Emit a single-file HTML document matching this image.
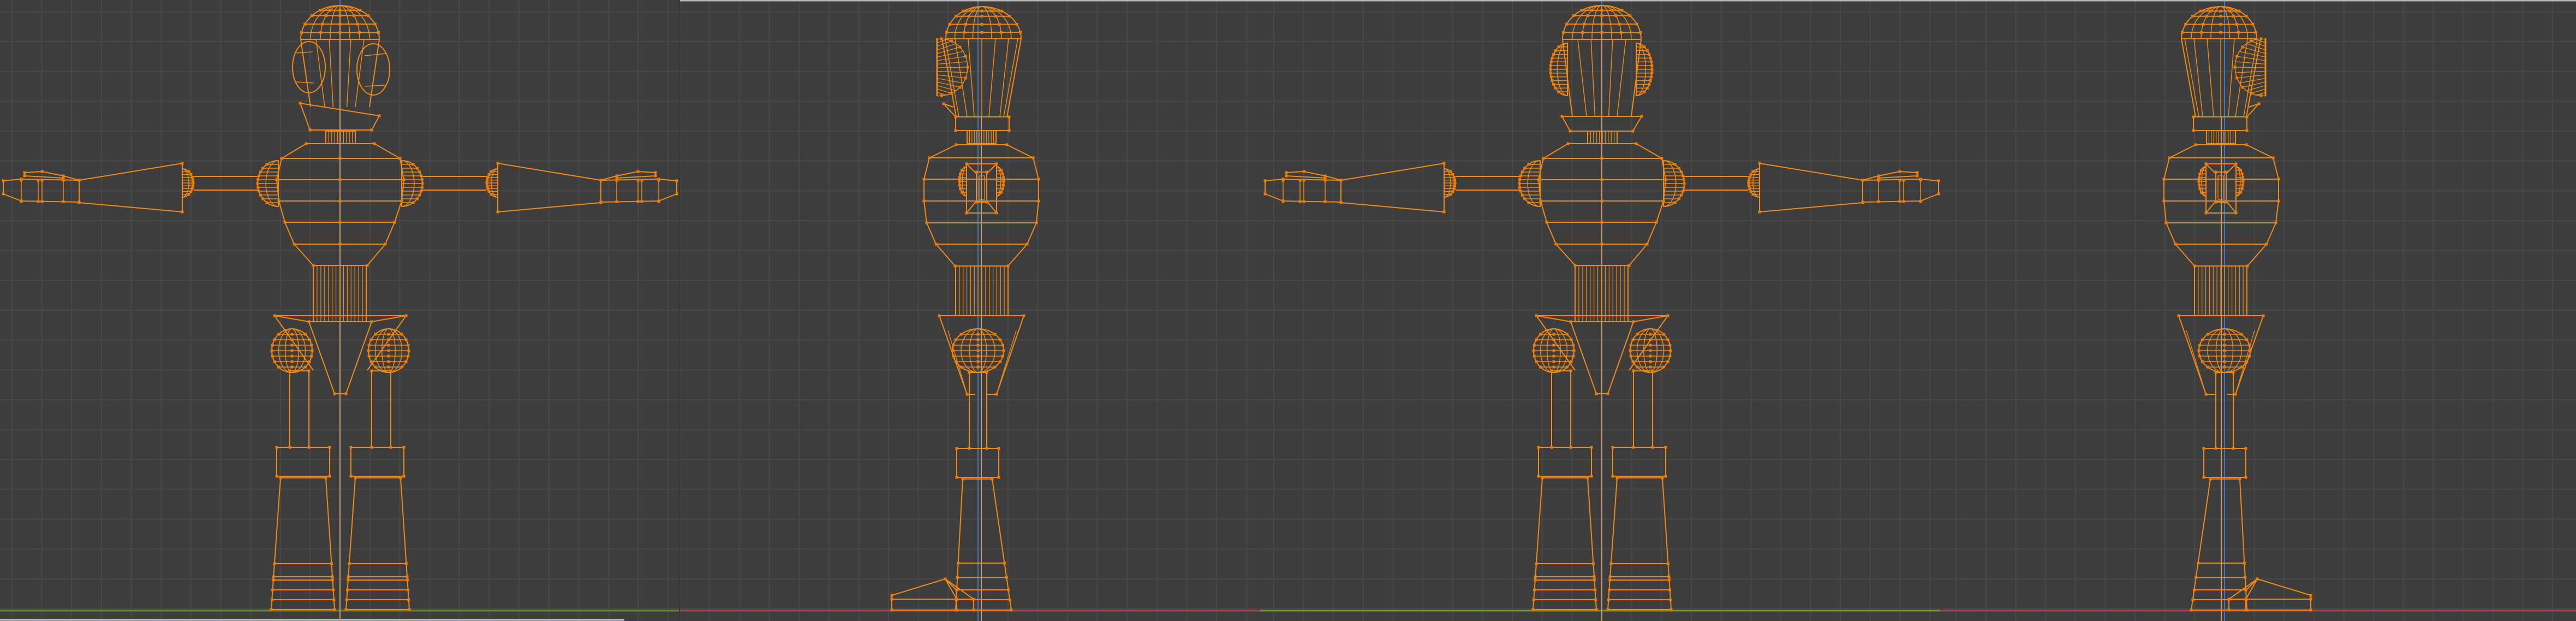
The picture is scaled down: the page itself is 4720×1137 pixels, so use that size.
<!DOCTYPE html>
<html><head><meta charset="utf-8">
<style>
html,body{margin:0;padding:0;background:#3d3d3d;overflow:hidden}
#s{display:block}
</style></head>
<body>
<svg id="s" xmlns="http://www.w3.org/2000/svg" width="4720" height="1137" viewBox="0 0 4720 1137">
<rect width="4720" height="1137" fill="#3d3d3d"/>
<g id="grid"></g>
<g id="axes"></g>
<g id="wire" fill="none" stroke="#f08a12" stroke-width="2" stroke-linejoin="round"></g>
<g id="dots" fill="#f07a00"></g>
</svg>
<script>
(function(){
var NS="http://www.w3.org/2000/svg";
var G=document.getElementById('grid'),A=document.getElementById('axes'),W=document.getElementById('wire'),D=document.getElementById('dots');
function el(p,tag,at){var e=document.createElementNS(NS,tag);for(var k in at)e.setAttribute(k,at[k]);p.appendChild(e);return e;}
function line(p,x1,y1,x2,y2,c,w){el(p,'line',{x1:x1,y1:y1,x2:x2,y2:y2,stroke:c,'stroke-width':w});}
var panels=[[0,1245,623],[1245,2309,1792],[2309,3555,2935],[3555,4720,4076]];
var sp=54.65;
panels.forEach(function(p){
  var x0=p[0],x1=p[1],c=p[2];
  for(var x=c-sp*30;x<x1;x+=sp){if(x>x0)line(G,x,0,x,1137,'#484848',2);}
  for(var y=21.5;y<1137;y+=sp){line(G,x0,y,x1,y,'#484848',2);}
  line(A,c,0,c,1137,'#3f78c0',2);
});
line(A,1245,1,4720,1,'#b8b8b8',3);
line(A,0,1118,1245,1118,'#5d8a2a',3);
line(A,1245,1118,2309,1118,'#a8404a',3);
line(A,2309,1118,3555,1118,'#6a9a2a',3);
line(A,3555,1118,4720,1118,'#a8404a',3);
line(A,0,1135,1144,1135,'#c8c8c8',3);
line(A,1245,0,1245,1137,'#363636',2);

function pl(pts,close,sw,col){var d='M'+pts.map(function(p){return p[0].toFixed(1)+','+p[1].toFixed(1)}).join('L')+(close?'Z':'');var a={d:d};if(sw)a['stroke-width']=sw;if(col)a.stroke=col;el(W,'path',a);}
function dots(pts){pts.forEach(function(p){el(D,'rect',{x:p[0]-2.5,y:p[1]-2.5,width:5,height:5});});}
function P(pts,close){pl(pts,close);dots(pts);}
function path(d,sw){var a={d:d};if(sw)a['stroke-width']=sw;el(W,'path',a);}
function dome(cx,top,base,rxl,rxr){
  var ry=base-top;
  path('M'+(cx-rxl)+','+base+' A'+rxl+','+ry+' 0 0 1 '+cx+','+top+' A'+rxr+','+ry+' 0 0 1 '+(cx+rxr)+','+base);
  [0.2,0.45,0.7,0.86].forEach(function(f){var t=Math.asin(f);var y=base-ry*f;var c=Math.cos(t);pl([[cx-rxl*c,y],[cx+rxr*c,y]]);dots([[cx-rxl*c,y],[cx+rxr*c,y],[cx-rxl*c*0.5,y],[cx+rxr*c*0.5,y],[cx,y]]);});
  [0.25,0.5,0.75].forEach(function(f){var a=rxl*f,b=rxr*f;path('M'+(cx-a)+','+base+' A'+a+','+ry+' 0 0 1 '+cx+','+top+' A'+b+','+ry+' 0 0 1 '+(cx+b)+','+base,1.5);});
  pl([[cx-rxl,base],[cx+rxr,base]]);
}
function halfball(fx,cy,rx,ry,dir,n){
  path('M'+fx+','+(cy-ry)+' A'+rx+','+ry+' 0 0 '+(dir>0?1:0)+' '+fx+','+(cy+ry)+'Z');
  path('M'+fx+','+(cy-ry)+' A'+(rx*0.6)+','+ry+' 0 0 '+(dir>0?1:0)+' '+fx+','+(cy+ry),1.5);
  for(var i=1;i<n;i++){var y=cy-ry+2*ry*i/n;var f=(y-cy)/ry;var w=rx*Math.sqrt(1-f*f);pl([[fx,y],[fx+dir*w,y]],0,1.5);dots([[fx+dir*w,y]]);}
}
function ball(cx,cy,rx,ry){
  el(W,'ellipse',{cx:cx,cy:cy,rx:rx,ry:ry});
  [0.33,0.66].forEach(function(f){el(W,'ellipse',{cx:cx,cy:cy,rx:rx*f,ry:ry,'stroke-width':1.5});});
  for(var i=1;i<8;i++){var y=cy-ry+2*ry*i/8;var f=(y-cy)/ry;var w=rx*Math.sqrt(1-f*f);pl([[cx-w,y],[cx+w,y]],0,1.5);dots([[cx-w,y],[cx+w,y],[cx,y]]);}
}
function vlines(x0,x1,y0,y1,n){for(var i=1;i<n;i++){var x=x0+(x1-x0)*i/n;pl([[x,y0],[x,y1]],0,1.2);}pl([[x0,y0],[x1,y0],[x1,y1],[x0,y1]],1);}

function front(cx,earStyle){
  dome(cx,10,72,72,72);
  var hb=earStyle?213:196;
  pl([[cx-72,72],[cx-54,hb]]);pl([[cx+72,72],[cx+54,hb]]);
  [-40,-18,18,40].forEach(function(d){pl([[cx+d*1.1,72],[cx+d*0.7,hb]],0,1.5);});
  pl([[cx,10],[cx,1137]],0,2,'#c89a70');
  if(!earStyle){
    el(W,'ellipse',{cx:cx-57,cy:123,rx:30,ry:47});
    el(W,'ellipse',{cx:cx+61,cy:127,rx:30,ry:47});
    pl([[cx-80,97],[cx-50,95]],0,1.5);pl([[cx-80,150],[cx-48,152]],0,1.5);
    pl([[cx+45,102],[cx+85,98]],0,1.5);pl([[cx+45,158],[cx+83,156]],0,1.5);
    P([[cx-73,189],[cx+72,212],[cx+58,238],[cx-55,238]],1);
  } else {
    halfball(cx-63,127,31,48,-1,14);
    halfball(cx+63,127,29,48,1,14);
    P([[cx-73,213],[cx+73,213],[cx+57,240],[cx-58,240]],1);
  }
  vlines(cx-26,cx+28,240,263,10);
  var T=[[cx-62,263],[cx+63,263],[cx+110,290],[cx+117,329],[cx+113,368],[cx+100,407],[cx+83,447],[cx+50,486],[cx-49,486],[cx-84,447],[cx-101,407],[cx-112,368],[cx-116,329],[cx-107,290]];
  P(T,1);
  [[2,13],[3,12],[4,11],[5,10],[6,9]].forEach(function(p){pl([T[p[1]],T[p[0]]]);dots([[cx,T[p[0]][1]]]);});
  [-1,1].forEach(function(s){
    halfball(cx+s*113,336,38,42,s,12);
    pl([[cx+s*150,323],[cx+s*268,323]]);pl([[cx+s*150,348],[cx+s*268,348]]);
    halfball(cx+s*289,335,20,26,-s,10);
    P([[cx+s*289,299],[cx+s*289,388],[cx+s*478,371],[cx+s*478,330]],1);
    var X=function(x){return s<0?cx-(623-x):cx+(623-x);};
    P([[X(145),330],[X(39),328],[X(6),331],[X(6),355],[X(39),368],[X(145),370]],0);
    pl([[X(145),330],[X(145),370]]);
    [39,70,77,116].forEach(function(x){pl([[X(x),330],[X(x),369]],0,1.5);dots([[X(x),330],[X(x),369]]);});
    P([[X(45),316],[X(77),314],[X(116),322],[X(145),330]]);
    P([[X(45),316],[X(45),322],[X(116),326]]);
  });
  vlines(cx-49,cx+48,486,589,14);
  P([[cx-120,578],[cx+121,578]]);
  P([[cx-57,589],[cx-10,721],[cx+11,721],[cx+58,589]],1);
  pl([[cx-120,578],[cx-49,678]]);pl([[cx+121,578],[cx+50,678]]);
  pl([[cx-120,578],[cx-57,589]]);pl([[cx+121,578],[cx+58,589]]);
  ball(cx-88,642,37,40);ball(cx+89,642,37,40);
  [[-92,-57,-116,-19,[-109,-26,-10,-126]],[58,93,20,117,[28,111,127,11]]].forEach(function(L){
    P([[cx+L[0],679],[cx+L[1],679],[cx+L[1],819],[cx+L[0],819]],1);
    P([[cx+L[2],819],[cx+L[3],819],[cx+L[3],872],[cx+L[2],872]],1);
    var s=L[4];
    P([[cx+s[0],875],[cx+s[1],875],[cx+s[2],1116],[cx+s[3],1116]],1);
    [1032,1056,1062,1080,1098].forEach(function(y){var f=(y-875)/241;var a=cx+s[0]+(s[3]-s[0])*f,b=cx+s[1]+(s[2]-s[1])*f;P([[a,y],[b,y]]);});
  });
}

function side(cx,m){
  var X=function(d){return cx+m*d;};
  var pp=function(a){return a.map(function(p){return [X(p[0]),p[1]];});};
  var dc=X(7);
  dome(dc,12,71,m>0?66:72,m>0?72:66);
  pl(pp([[-66,71],[-40,214]]));pl(pp([[79,71],[53,214]]));
  pl(pp([[-60,71],[-35,214]]),0,1.5);pl(pp([[73,71],[47,214]]),0,1.5);
  [[-42,-20],[-18,-7],[7,7],[32,20],[56,40]].forEach(function(p){pl(pp([[p[0],71],[p[1],214]]),0,1.5);});
  var ex=X(-75);
  pl([[ex,70],[ex,176]],0,3);
  var tips=[];
  for(var i=0;i<=16;i++){var t=-Math.PI/2+Math.PI*i/16;tips.push([ex+m*(48*Math.cos(t)+8),123+52*Math.sin(t)]);}
  pl(tips,0,1.5);
  for(var i=0;i<=16;i++){pl([[ex,72+i*6.5],tips[i]],0,1.3);}
  dots(tips.filter(function(_,i){return i%2==0;}));
  P(pp([[-63,190],[-41,214],[-41,239]]));pl(pp([[-63,190],[-45,196]]));
  P(pp([[-41,214],[57,214],[57,239],[-41,239]]),1);
  vlines(X(-20),X(33),239,263,12);
  pl(pp([[6,214],[6,1137]]),0,2,'#c89a70');
  var T=pp([[-40,265],[53,265],[101,289],[111,328],[111,368],[107,408],[90,447],[55,487],[-42,487],[-77,447],[-94,408],[-99,368],[-99,328],[-89,289]]);
  P(T,1);
  [[2,13],[3,12],[4,11],[5,10],[6,9]].forEach(function(p){pl([T[p[0]],T[p[1]]]);});
  P(pp([[-21,300],[34,300],[34,390],[-21,390]]),1);
  pl(pp([[-21,300],[-3,318]]));pl(pp([[34,300],[16,318]]));pl(pp([[-21,390],[-3,368]]));pl(pp([[34,390],[16,368]]));
  P(pp([[-3,315],[16,315],[16,370],[-3,370]]),1);
  pl(pp([[2,322],[12,322],[12,365],[2,365]]),1,1.3);
  halfball(X(-21),332,13,27,-m,8);halfball(X(34),332,13,27,m,8);
  vlines(X(-41),X(55),487,578,14);
  P(pp([[-71,578],[84,578]]));
  P(pp([[-71,578],[-20,722]]));P(pp([[84,578],[34,722]]));
  pl(pp([[-20,722],[-5,722]]));pl(pp([[34,722],[16,722]]));
  pl(pp([[-55,605],[-20,722]]),0,1.3);pl(pp([[70,605],[34,722]]),0,1.3);
  ball(cx,642,47,40);
  P(pp([[-16,682],[16,682],[16,821],[-16,821]]),1);
  P(pp([[-39,821],[38,821],[38,874],[-39,874]]),1);
  P(pp([[-28,877],[26,877],[61,1117],[-41,1117]]),1);
  [1031,1057,1080,1098].forEach(function(y){var f=(y-877)/240;P(pp([[-28-13*f,y],[26+35*f,y]]));});
  P(pp([[-158,1090],[-60,1060],[-8,1097],[-39,1097]]));
  P(pp([[-158,1090],[-158,1117]]));
  pl(pp([[-158,1117],[61,1117]]));
  P(pp([[-158,1097],[-8,1097]]));
  pl(pp([[-60,1060],[-39,1097]]));pl(pp([[-60,1060],[-40,1080]]));
  P(pp([[-39,1097],[-39,1117]]));P(pp([[-8,1097],[-8,1117]]));
}

front(623,false);
front(2935,true);
side(1792,1);
side(4076,-1);
})();
</script>
</body></html>
